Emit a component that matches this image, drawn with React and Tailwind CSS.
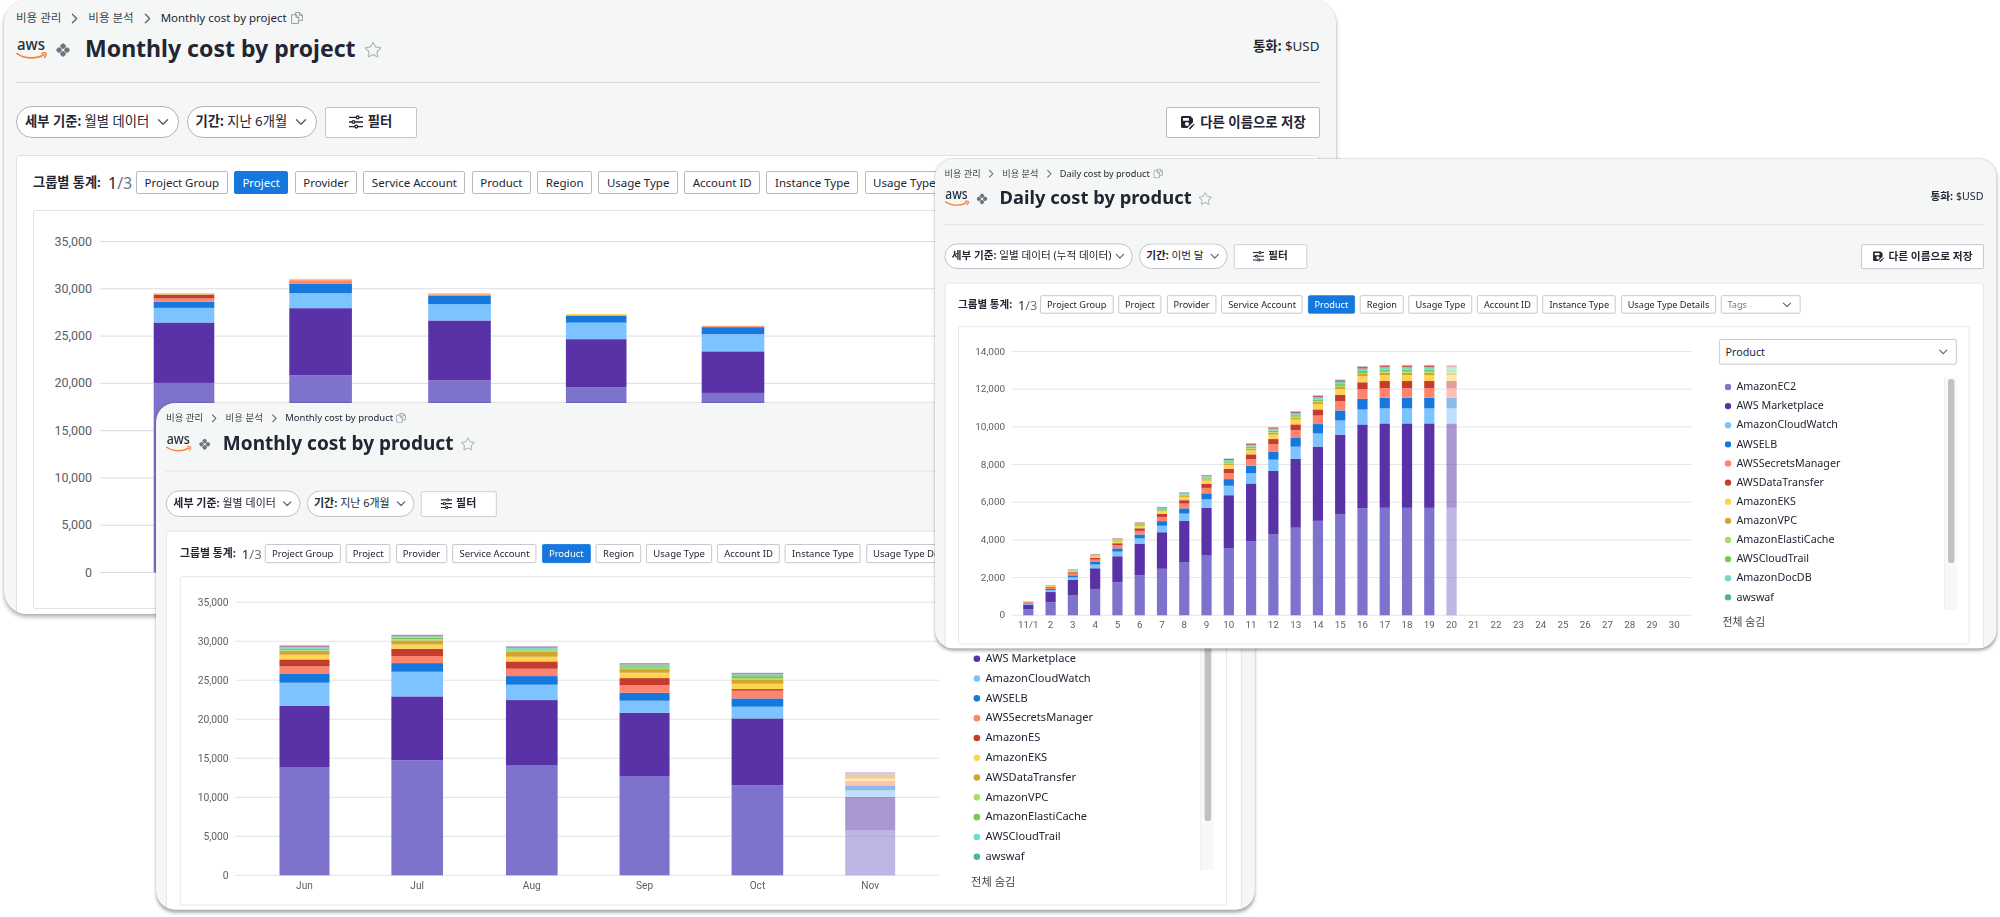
import React from "react";
import { ChevronDown, ChevronRight, Star } from "lucide-react";
import { MdSaveAs } from "react-icons/md";
import clsx from "clsx";

const PALETTE = [
  "#7d72cc",
  "#5832a6",
  "#7dc3ff",
  "#1678dd",
  "#ff846e",
  "#c33c2e",
  "#ffd451",
  "#d4a42e",
  "#abdb6b",
  "#77c955",
  "#6fdad0",
  "#4fb39f",
  "#b48ba8",
];

const DAILY_PALETTE = [...PALETTE.slice(0, 11), "#cf5f52", "#9fa6c9"];

const GROUPS = [
  "Project Group",
  "Project",
  "Provider",
  "Service Account",
  "Product",
  "Region",
  "Usage Type",
  "Account ID",
  "Instance Type",
  "Usage Type Details",
];

// plot area of the chart, in svg units
const PLOT = { left: 66, right: 919.5, top: 30.5, bottom: 361.5 };

const MONTHS = [
  { label: "Jun", x: 150, width: 60.6 },
  { label: "Jul", x: 286.6, width: 62.6 },
  { label: "Aug", x: 425.5, width: 62.6 },
  { label: "Sep", x: 562.2, width: 60.6 },
  { label: "Oct", x: 699, width: 62.6 },
  { label: "Nov", x: 835.7, width: 60.6 },
];

const withValues = (rows) =>
  MONTHS.map((month, i) => ({
    ...month,
    values: rows[i],
    faded: month.label === "Nov",
  }));

const projectBars = withValues([
  [20046, 6393, 1543, 645, 349, 423, 150],
  [20850, 7101, 1585, 1025, 349, 0, 140],
  [20310, 6340, 1722, 919, 130, 0, 130],
  [19602, 5072, 1744, 740, 50, 0, 127],
  [18989, 4396, 1818, 740, 100, 0, 60],
  [7800, 3100, 900, 500, 200, 0, 60],
]);

const productBars = withValues([
  [13878, 7857, 2946, 1196, 897, 897, 598, 512, 85, 171, 171, 60, 200],
  [14732, 8198, 3160, 1110, 897, 940, 555, 512, 150, 213, 130, 30, 200],
  [14134, 8327, 1964, 1110, 940, 940, 598, 683, 110, 140, 170, 30, 200],
  [12725, 8113, 1537, 1025, 982, 897, 683, 470, 170, 200, 170, 40, 180],
  [11529, 8583, 1495, 1068, 982, 213, 683, 555, 170, 256, 180, 60, 180],
  [5722, 4355, 811, 640, 555, 0, 300, 500, 0, 0, 0, 0, 340],
]);

const DAILY_TOTALS = [
  743, 1611, 2443, 3257, 4089, 4938, 5753, 6531, 7452, 8319, 9133, 10000,
  10832, 11682, 12514, 13222, 13293, 13293, 13293, 13293,
];

const DAILY_MIX = [
  0.429, 0.337, 0.06, 0.0426, 0.0386, 0.028, 0.024, 0.0093, 0.004, 0.008,
  0.0093, 0.007, 0.0027,
];

const dailyBars = Array.from({ length: 30 }, (_, i) => ({
  label: i === 0 ? "11/1" : String(i + 1),
  x: 87.1 + i * 27.95,
  width: 12.8,
  values: i < 20 ? DAILY_MIX.map((part) => part * DAILY_TOTALS[i]) : [],
  faded: i === 19,
}));

const monthlyLegend = [
  "AmazonEC2",
  "AWS Marketplace",
  "AmazonCloudWatch",
  "AWSELB",
  "AWSSecretsManager",
  "AmazonES",
  "AmazonEKS",
  "AWSDataTransfer",
  "AmazonVPC",
  "AmazonElastiCache",
  "AWSCloudTrail",
  "awswaf",
];

const dailyLegend = [
  "AmazonEC2",
  "AWS Marketplace",
  "AmazonCloudWatch",
  "AWSELB",
  "AWSSecretsManager",
  "AWSDataTransfer",
  "AmazonEKS",
  "AmazonVPC",
  "AmazonElastiCache",
  "AWSCloudTrail",
  "AmazonDocDB",
  "awswaf",
];

const AwsLogo = () => (
  <svg viewBox="0 0 32 22" className="w-8 h-[22px] shrink-0 relative top-0.5">
    <text
      x="15"
      y="11"
      textAnchor="middle"
      textLength="28"
      lengthAdjust="spacingAndGlyphs"
      fill="#252f3e"
      fontSize="17"
      fontWeight="500"
      fontFamily="Noto Sans, sans-serif"
    >
      aws
    </text>
    <path d="M1 14.6c7.500 5.400 19.500 5.600 27 1.200" fill="none" stroke="#f58536" strokeWidth="1.700" strokeLinecap="round" />
    <path d="M25.800 14.200c1.700-.6 3.600-.7 4.200 0 .4.900-.3 3-1.600 4.500" fill="none" stroke="#f0693c" strokeWidth="1.200" strokeLinecap="round" />
  </svg>
);

const ClusterIcon = () => (
  <svg viewBox="0 0 14 14" className="size-3.5 shrink-0" fill="#6f7480">
    <rect x="-2.500" y="-2.500" width="5" height="5" rx="1.900" transform="translate(7 3.100) rotate(45)" />
    <rect x="-2.500" y="-2.500" width="5" height="5" rx="1.900" transform="translate(3.100 7) rotate(45)" />
    <rect x="-2.500" y="-2.500" width="5" height="5" rx="1.900" transform="translate(10.900 7) rotate(45)" />
    <rect x="-2.500" y="-2.500" width="5" height="5" rx="1.900" transform="translate(7 10.900) rotate(45)" />
  </svg>
);

const CopyIcon = () => (
  <svg viewBox="0 0 12 12" className="size-3 shrink-0" fill="none" stroke="#8b909b" strokeWidth="0.900" strokeLinejoin="round">
    <path d="M4.600 .6h4.200l2.600 2.600v5.200H8.200" />
    <path d="M8.600 .6v2.800h2.800" />
    <path d="M4.600 .6v2" />
    <path d="M.6 2.700h4.600l2.400 2.500v6.200H.6z" />
    <path d="M5 2.700v2.700h2.600" />
  </svg>
);

const FilterIcon = () => (
  <svg viewBox="0 0 14 14" className="size-3.5 shrink-0" fill="none" stroke="#232533" strokeWidth="1.300">
    <path d="M0 2.400h7.200M10.200 2.400H14M0 7h3M6 7h8M0 11.600h5.800M8.800 11.600H14" />
    <circle cx="8.700" cy="2.400" r="1.400" />
    <circle cx="4.500" cy="7" r="1.400" />
    <circle cx="7.300" cy="11.600" r="1.400" />
  </svg>
);

const Pill = ({ label, value, className }) => (
  <div
    className={clsx(
      "h-8 flex items-center justify-between pl-2 pr-[6px] rounded-full border border-[#b0b3ba] bg-white text-[13.300px] whitespace-nowrap",
      className
    )}
  >
    <span>
      <b className="font-bold">{label}:</b> {value}
    </span>
    <ChevronDown size={18} strokeWidth={1.9} className="text-[#5b606c] shrink-0" />
  </div>
);

const Chart = ({ bars, ticks, colors = PALETTE }) => {
  const max = ticks[ticks.length - 1];
  const toY = (value) => PLOT.bottom - (value / max) * (PLOT.bottom - PLOT.top);

  return (
    <svg viewBox="0 0 954 396" className="w-[954px] h-[396px] shrink-0 font-[Roboto,sans-serif]">
      {ticks.map((tick) => (
        <g key={tick}>
          <line x1={PLOT.left} x2={PLOT.right} y1={toY(tick)} y2={toY(tick)} stroke="#dcdde0" />
          <text x="58" y={toY(tick) + 4} textAnchor="end" fontSize="12.500" fill="#5c6069">
            {tick.toLocaleString("en-US")}
          </text>
        </g>
      ))}
      {bars.map((bar) => {
        let total = 0;
        return (
          <g key={bar.label}>
            <g opacity={bar.faded ? 0.5 : 1}>
              {bar.values.map((value, i) => {
                total += value;
                return (
                  <rect
                    key={i}
                    x={bar.x - bar.width / 2}
                    y={toY(total)}
                    width={bar.width}
                    height={toY(total - value) - toY(total)}
                    fill={colors[i]}
                  />
                );
              })}
            </g>
            <text x={bar.x} y="377.600" textAnchor="middle" fontSize="12.300" fill="#5c6069">
              {bar.label}
            </text>
          </g>
        );
      })}
    </svg>
  );
};

const Legend = ({ title, items }) => (
  <div className="w-[298px] pt-[15px]">
    <div className="h-8 flex items-center justify-between px-[7px] rounded-xs border border-[#b9bbc1] bg-white text-[13.400px]">
      {title}
      <ChevronDown size={18} strokeWidth={1.8} className="text-[#5b606c]" />
    </div>
    <div className="mt-[15.500px] h-[292px] flex justify-between">
      <ul>
        {items.map((item, i) => (
          <li key={item} className="h-6 flex items-center gap-[6.500px] pl-[7px] text-[13.450px]">
            <span className="size-2 rounded-full" style={{ backgroundColor: PALETTE[i] }} />
            {item}
          </li>
        ))}
      </ul>
      <div className="w-4 bg-[#f8f8f8] border-l border-[#ececec] flex justify-center pt-0.5">
        <div className="w-2 h-[231px] rounded-full bg-[#c0c1c3]" />
      </div>
    </div>
    <p className="mt-[5.500px] pl-1 text-[13.600px] leading-5 text-[#40444f]">전체 숨김</p>
  </div>
);

const CostWindow = ({ name, active, period, range, wide, legend, className, ...chart }) => (
  <section
    className={clsx(
      "absolute origin-top-left w-[1332px] h-[613.500px] overflow-hidden rounded-[23px] bg-[#f5f7f7] pl-3 pr-[16.500px] text-[#232533] shadow-[0_3px_4px_rgba(0,0,0,0.3),0_0_2px_rgba(0,0,0,0.12)]",
      className
    )}
  >
    <header className="h-[82.500px] border-b border-[#d9dbde]">
      <nav className="pt-[9px] h-[27px] flex items-center text-[11.500px]">
        <span className="text-[#40444f]">비용 관리</span>
        <ChevronRight size={17} strokeWidth={1.8} className="mx-[5px] text-[#5b606c]" />
        <span className="text-[#40444f]">비용 분석</span>
        <ChevronRight size={17} strokeWidth={1.8} className="mx-[5px] text-[#5b606c]" />
        <span className="mr-1">{name}</span>
        <CopyIcon />
      </nav>
      <div className="h-[42.500px] flex items-center">
        <AwsLogo />
        <span className="ml-2 mr-[15px] mt-1">
          <ClusterIcon />
        </span>
        <h1 className="text-[23.050px] font-bold leading-8 whitespace-nowrap">{name}</h1>
        <Star size={18} strokeWidth={1.7} className="ml-2 mt-[3px] text-[#b4b7be]" />
        <p className="ml-auto -mt-1 text-[13.400px]">
          <b>통화:</b> $USD
        </p>
      </div>
    </header>

    <div className="mt-[23.500px] h-8 flex items-center gap-2">
      <Pill label="세부 기준" value={period} className={wide ? "w-[236px]" : "w-[162.500px]"} />
      <Pill label="기간" value={range} className={wide ? "w-[111px]" : "w-[130px]"} />
      <button className="w-[92px] h-[31px] flex items-center justify-center gap-[5px] rounded-xs border border-[#c3c5ca] bg-white text-[13.300px] font-bold">
        <FilterIcon />
        필터
      </button>
      <button className="ml-auto w-[154px] h-[31px] flex items-center justify-center gap-[5px] rounded-xs border border-[#b9bbc1] bg-white text-[13.400px] font-bold">
        <MdSaveAs size={16} />
        다른 이름으로 저장
      </button>
    </div>

    <main className="mt-[17px] h-[600px] px-4 pt-[15px] rounded-sm border border-[#dfe0e3] bg-white">
      <div className="h-[23px] flex items-center">
        <b className="w-[75px] text-[13.200px] whitespace-nowrap">그룹별 통계:</b>
        <span className="w-[28px] text-base text-[#6f7480]">
          <span className="text-[#232533]">1</span>/3
        </span>
        <ul className="flex gap-[6.300px]">
          {GROUPS.map((group) => (
            <li
              key={group}
              className={clsx(
                "h-[23px] flex items-center px-[7.500px] rounded-xs border text-[11.500px] whitespace-nowrap",
                group === active
                  ? "border-[#1678dd] bg-[#1678dd] text-white"
                  : "border-[#b9bbc1] bg-white"
              )}
            >
              {group}
            </li>
          ))}
          <li className="h-[23px] w-[100px] flex items-center justify-between pl-[7px] pr-[7px] rounded-xs border border-[#b9bbc1] text-[11.500px] text-[#747984]">
            Tags
            <ChevronDown size={18} strokeWidth={1.8} className="text-[#5b606c]" />
          </li>
        </ul>
      </div>
      <div className="mt-[16px] h-[398.500px] w-[1269px] flex rounded-xs border border-[#e1e2e5]">
        <Chart {...chart} />
        {legend && <Legend title={active} items={legend} />}
      </div>
    </main>
  </section>
);

const MONTHLY_TICKS = [0, 5000, 10000, 15000, 20000, 25000, 30000, 35000];
const DAILY_TICKS = [0, 2000, 4000, 6000, 8000, 10000, 12000, 14000];

const App = () => {
  return (
    <div className="relative w-[2000px] h-[917px] overflow-hidden bg-white font-['Noto_Sans','Noto_Sans_CJK_KR',sans-serif]">
      <CostWindow
        name="Monthly cost by project"
        active="Project"
        period="월별 데이터"
        range="지난 6개월"
        bars={projectBars}
        ticks={MONTHLY_TICKS}
        className="left-1 top-0"
      />
      <CostWindow
        name="Monthly cost by product"
        active="Product"
        period="월별 데이터"
        range="지난 6개월"
        bars={productBars}
        ticks={MONTHLY_TICKS}
        legend={monthlyLegend}
        className="left-[155.700px] top-[403.200px] scale-[0.825]"
      />
      <CostWindow
        name="Daily cost by product"
        active="Product"
        period="일별 데이터 (누적 데이터)"
        range="이번 달"
        wide
        bars={dailyBars}
        ticks={DAILY_TICKS}
        colors={DAILY_PALETTE}
        legend={dailyLegend}
        className="left-[934.700px] top-[159.400px] scale-[0.797]"
      />
    </div>
  );
};

export default App;
